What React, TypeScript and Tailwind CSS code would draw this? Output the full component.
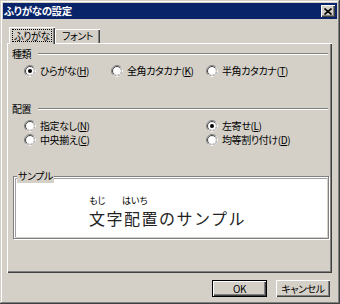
import React from "react";

const raised =
  "shadow-[inset_1px_1px_#ffffff,inset_-1px_-1px_#404040,inset_-2px_-2px_#808080]";

function Radio({ checked }: { checked?: boolean }) {
  return (
    <svg width="12" height="12" viewBox="0 0 12 12" className="shrink-0">
      <circle cx="6" cy="6" r="5.5" fill="#fff" stroke="#808080" />
      <path d="M2.11 9.89A5.5 5.5 0 0 0 9.89 2.11" fill="none" stroke="#fff" />
      <circle cx="6" cy="6" r="4.5" fill="none" stroke="#404040" />
      <path d="M2.82 9.18A4.5 4.5 0 0 0 9.18 2.82" fill="none" stroke="#d4d0c8" />
      {checked && <circle cx="6" cy="6" r="2" fill="#000" />}
    </svg>
  );
}

function Option({ label, mnemonic, checked }: { label: string; mnemonic: string; checked?: boolean }) {
  return (
    <div className="flex items-center gap-[4px] h-[14px]">
      <Radio checked={checked} />
      <span className="whitespace-nowrap">
        {label}(<span className="underline">{mnemonic}</span>)
      </span>
    </div>
  );
}

function GroupHeader({ title }: { title: string }) {
  return (
    <div className="flex items-center h-[14px] pl-[5px] pr-[4px]">
      <span className="w-[26px]">{title}</span>
      <div className="flex-1 h-[2px] border-t border-t-[#808080] border-b border-b-white" />
    </div>
  );
}

export default function App() {
  return (
    <div className="w-[340px] h-[304px] bg-[#d4d0c8] p-[3px] flex flex-col text-black text-[10px] leading-[14px] tracking-[-0.4px] font-['Noto_Sans_CJK_JP',sans-serif] [font-feature-settings:'palt'] shadow-[inset_-1px_-1px_#404040,inset_1px_1px_#d4d0c8,inset_-2px_-2px_#808080,inset_2px_2px_#ffffff]">
      {/* title bar */}
      <div className="h-[16px] bg-[#0a246a] flex items-center justify-between pl-[1px] pr-[2px]">
        <span className="text-white font-bold text-[10.5px] leading-[16px]">ふりがなの設定</span>
        <div className={`w-[14px] h-[12px] bg-[#d4d0c8] flex items-center justify-center ${raised}`}>
          <svg width="8" height="7" viewBox="0 0 8 7">
            <path d="M0.5 0.5L7.5 6.5M7.5 0.5L0.5 6.5" stroke="#000" strokeWidth="1.6" />
          </svg>
        </div>
      </div>

      <div className="pt-[8px] pl-[4px] pr-[5px]">
        {/* tabs */}
        <div className="flex items-start h-[16px] pl-[2px]">
          <div className="relative z-10 w-[46px] h-[17px] bg-[#d4d0c8] flex justify-center pt-[2px] shadow-[inset_1px_1px_#ffffff,inset_-1px_0_#404040,inset_-2px_0_#808080]">
            <span className="border border-dotted border-black px-[1px] h-[13px] leading-[11px]">ふりがな</span>
          </div>
          <div className="mt-[2px] w-[45px] h-[14px] flex justify-center leading-[14px] shadow-[inset_1px_1px_#ffffff,inset_-1px_0_#404040,inset_-2px_0_#808080]">
            フォント
          </div>
        </div>

        {/* panel */}
        <div className={`h-[230px] pt-[4px] ${raised}`}>
          <GroupHeader title="種類" />
          <div className="mt-[3px] pl-[17px] flex">
            <div className="w-[87px]">
              <Option label="ひらがな" mnemonic="H" checked />
            </div>
            <div className="w-[95px]">
              <Option label="全角カタカナ" mnemonic="K" />
            </div>
            <Option label="半角カタカナ" mnemonic="T" />
          </div>

          <div className="mt-[24px]">
            <GroupHeader title="配置" />
          </div>
          <div className="mt-[3px] pl-[17px] grid grid-cols-[182px_1fr]">
            <Option label="指定なし" mnemonic="N" />
            <Option label="左寄せ" mnemonic="L" checked />
            <Option label="中央揃え" mnemonic="C" />
            <Option label="均等割り付け" mnemonic="D" />
          </div>

          {/* sample */}
          <div className="relative mt-[29px] ml-[6px] mr-[3px] h-[63px] border border-[#808080] p-[1px] shadow-[inset_1px_1px_#ffffff,1px_1px_#ffffff]">
            <span className="absolute left-[3px] top-[-8px] bg-[#d4d0c8] px-[1px]">サンプル</span>
            <div className="h-full bg-white border-t border-l border-[#a0a0a0] pl-[73px] pt-[16px]">
              <div className="flex text-[9px] leading-[11px] tracking-normal">
                <span className="w-[33px]">もじ</span>
                <span>はいち</span>
              </div>
              <div className="mt-[4px] text-[16px] leading-[17px] tracking-[1.5px] [font-feature-settings:normal] text-[#222]">
                文字配置のサンプル
              </div>
            </div>
          </div>
        </div>
      </div>

      {/* buttons */}
      <div className="mt-[7px] flex justify-end gap-[9px] pr-[7px]">
        <div className="w-[55px] h-[17px] border border-black">
          <div className={`h-full flex items-center justify-center leading-[14px] ${raised}`}>OK</div>
        </div>
        <div className={`w-[54px] h-[17px] flex items-center justify-center leading-[14px] ${raised}`}>キャンセル</div>
      </div>
    </div>
  );
}
